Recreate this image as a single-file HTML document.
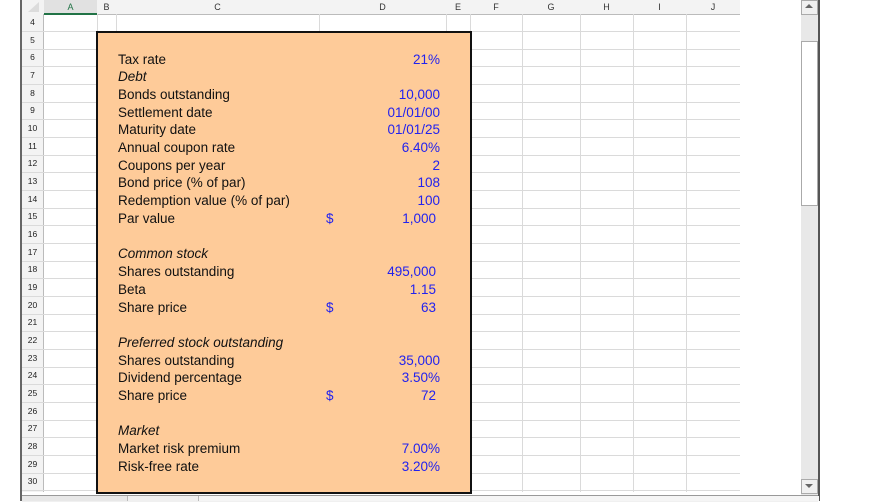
<!DOCTYPE html><html><head><style>
body{margin:0;width:880px;height:501px;overflow:hidden;background:#fff;font-family:"Liberation Sans",Arial,sans-serif;position:relative}
.a{position:absolute}
.hl{position:absolute;left:22px;width:718px;height:1px;background:#dadada}
.vl{position:absolute;top:14px;height:478px;width:1px;background:#dadada}
.ch{position:absolute;top:0;height:14px;font-size:9px;color:#333;text-align:center;line-height:14px}
.rh{position:absolute;left:22px;width:21px;font-size:8.5px;color:#222;text-align:center;height:17px;line-height:17px}
.t{position:absolute;left:118px;font-size:13.5px;color:#111;line-height:17px;margin-top:1px}
.v{position:absolute;font-size:13.5px;color:#2222ee;line-height:17px;text-align:right;margin-top:1px}
.d{position:absolute;left:326px;font-size:13.5px;color:#2222ee;line-height:17px;margin-top:1px}
</style></head><body>
<div class="a" style="left:0;top:0;width:21px;height:501px;background:#fff"></div>
<div class="a" style="left:20px;top:0;width:2px;height:501px;background:#666"></div>
<div class="a" style="left:22px;top:0;width:718px;height:14px;background:#f3f3f3;border-bottom:1px solid #bbb"></div>
<div class="a" style="left:22px;top:14px;width:21px;height:478px;background:#f3f3f3;border-right:1px solid #bbb"></div>
<div class="a" style="left:44px;top:0;width:53px;height:13px;background:#e1e1e1;border-bottom:2px solid #217346"></div>
<div class="a" style="left:28px;top:2px;width:0;height:0;border-left:11px solid transparent;border-bottom:10px solid #dcdcdc"></div>
<div class="ch" style="left:44px;width:53px;color:#217346">A</div>
<div class="ch" style="left:97px;width:19px">B</div>
<div class="ch" style="left:116px;width:203px">C</div>
<div class="ch" style="left:319px;width:127px">D</div>
<div class="ch" style="left:446px;width:24px">E</div>
<div class="ch" style="left:470px;width:52px">F</div>
<div class="ch" style="left:522px;width:58px">G</div>
<div class="ch" style="left:580px;width:53px">H</div>
<div class="ch" style="left:633px;width:53px">I</div>
<div class="ch" style="left:686px;width:54px">J</div>
<div class="vl" style="left:97px"></div><div class="vl" style="left:116px"></div><div class="vl" style="left:319px"></div><div class="vl" style="left:446px"></div><div class="vl" style="left:470px"></div><div class="vl" style="left:522px"></div><div class="vl" style="left:580px"></div><div class="vl" style="left:633px"></div><div class="vl" style="left:686px"></div><div class="vl" style="left:740px"></div>
<div id="rows"></div>
<script>
var h='';for(var n=4;n<=30;n++){var y=14+(n-4)*17.67;h+='<div class="rh" style="top:'+y+'px">'+n+'</div><div class="hl" style="top:'+(y+17)+'px"></div>';}
document.getElementById('rows').innerHTML=h;
</script>
<div class="a" style="left:96px;top:31px;width:372px;height:459px;background:#fecb99;border:2px solid #111"></div>
<div class="t" style="top:50px">Tax rate</div><div class="v" style="top:50px;left:340px;width:100px">21%</div>
<div class="t" style="top:67px;font-style:italic">Debt</div>
<div class="t" style="top:85px">Bonds outstanding</div><div class="v" style="top:85px;left:340px;width:100px">10,000</div>
<div class="t" style="top:103px">Settlement date</div><div class="v" style="top:103px;left:340px;width:100px">01/01/00</div>
<div class="t" style="top:120px">Maturity date</div><div class="v" style="top:120px;left:340px;width:100px">01/01/25</div>
<div class="t" style="top:138px">Annual coupon rate</div><div class="v" style="top:138px;left:340px;width:100px">6.40%</div>
<div class="t" style="top:156px">Coupons per year</div><div class="v" style="top:156px;left:340px;width:100px">2</div>
<div class="t" style="top:173px">Bond price (% of par)</div><div class="v" style="top:173px;left:340px;width:100px">108</div>
<div class="t" style="top:191px">Redemption value (% of par)</div><div class="v" style="top:191px;left:340px;width:100px">100</div>
<div class="t" style="top:209px">Par value</div><div class="d" style="top:209px">$</div><div class="v" style="top:209px;left:340px;width:96px">1,000</div>
<div class="t" style="top:244px;font-style:italic">Common stock</div>
<div class="t" style="top:262px">Shares outstanding</div><div class="v" style="top:262px;left:340px;width:96px">495,000</div>
<div class="t" style="top:280px">Beta</div><div class="v" style="top:280px;left:340px;width:96px">1.15</div>
<div class="t" style="top:298px">Share price</div><div class="d" style="top:298px">$</div><div class="v" style="top:298px;left:340px;width:96px">63</div>
<div class="t" style="top:333px;font-style:italic">Preferred stock outstanding</div>
<div class="t" style="top:351px">Shares outstanding</div><div class="v" style="top:351px;left:340px;width:100px">35,000</div>
<div class="t" style="top:368px">Dividend percentage</div><div class="v" style="top:368px;left:340px;width:100px">3.50%</div>
<div class="t" style="top:386px">Share price</div><div class="d" style="top:386px">$</div><div class="v" style="top:386px;left:340px;width:96px">72</div>
<div class="t" style="top:421px;font-style:italic">Market</div>
<div class="t" style="top:439px">Market risk premium</div><div class="v" style="top:439px;left:340px;width:100px">7.00%</div>
<div class="t" style="top:457px">Risk-free rate</div><div class="v" style="top:457px;left:340px;width:100px">3.20%</div>
<div class="a" style="left:740px;top:0;width:61px;height:496px;background:#fff"></div>
<div class="a" style="left:801px;top:0;width:17px;height:496px;background:#e8e8e8"></div>
<div class="a" style="left:801px;top:0;width:15px;height:13px;background:#f0f0f0;border:1px solid #aaa"></div>
<div class="a" style="left:805px;top:4px;border-left:4px solid transparent;border-right:4px solid transparent;border-bottom:4px solid #666"></div>
<div class="a" style="left:801px;top:41px;width:15px;height:163px;background:#fff;border:1px solid #aaa"></div>
<div class="a" style="left:801px;top:479px;width:15px;height:13px;background:#f0f0f0;border:1px solid #aaa"></div>
<div class="a" style="left:805px;top:484px;border-left:4px solid transparent;border-right:4px solid transparent;border-top:4px solid #666"></div>
<div class="a" style="left:818px;top:0;width:2px;height:501px;background:#555"></div>
<div class="a" style="left:22px;top:495px;width:796px;height:6px;background:#f0f0f0;border-top:1px solid #999"></div>
<div class="a" style="left:22px;top:496px;width:105px;height:5px;border-right:1px solid #bbb;background:#e8e8e8"></div>
<div class="a" style="left:198px;top:496px;width:620px;height:5px;border-left:1px solid #bbb;background:#f5f5f5"></div>
</body></html>
